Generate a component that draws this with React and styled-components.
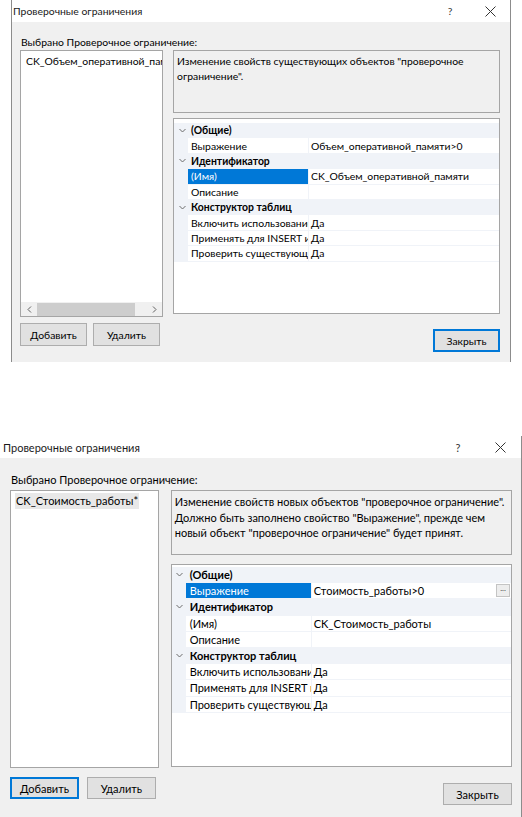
import React from "react"
import styled, { createGlobalStyle } from "styled-components"

const GlobalStyle = createGlobalStyle`
  html, body {
    margin: 0;
    padding: 0;
    background: #fff;
  }
  body {
    font-family: "Segoe UI", Lato, "Open Sans", sans-serif;
    color: #000;
  }
`

const Page = styled.div`
  width: 522px;
  height: 817px;
  overflow: hidden;
  background: #fff;
  display: flex;
  flex-direction: column;
`

const Window = styled.div`
  margin-left: ${p => p.$left}px;
  margin-top: ${p => p.$top}px;
  width: ${p => p.$width}px;
  box-sizing: border-box;
  border-left: ${p => (p.$leftBorder ? "1px solid #8c8c8c" : "none")};
  border-right: 1px solid #8c8c8c;
  font-size: ${p => p.$font}px;
  display: flex;
  flex-direction: column;
  flex-shrink: 0;
`

const TitleBar = styled.div`
  height: 22px;
  background: #fff;
  display: flex;
  align-items: center;
  padding-left: ${p => p.$pad}px;
  color: #1a1a1a;
`

const Title = styled.div`
  flex: 1;
`

const Caption = styled.div`
  width: ${p => p.$w}px;
  display: flex;
  justify-content: center;
  color: #333;
`

const Body = styled.div`
  background: #f0f0f0;
  height: ${p => p.$height}px;
  box-sizing: border-box;
  padding: ${p => p.$padTop}px ${p => p.$padRight}px 0 ${p => p.$padLeft}px;
  display: flex;
  flex-direction: column;
`

const Label = styled.div`
  height: ${p => p.$h}px;
  line-height: ${p => p.$h}px;
  margin-left: 1px;
  margin-bottom: ${p => p.$mb}px;
  white-space: nowrap;
`

const Main = styled.div`
  display: flex;
  align-items: flex-start;
  gap: ${p => p.$gap}px;
`

const ListBox = styled.div`
  width: ${p => p.$w}px;
  height: ${p => p.$h}px;
  box-sizing: border-box;
  border: 1px solid #a5a5a5;
  background: #fff;
  display: flex;
  flex-direction: column;
  overflow: hidden;
`

const ListItems = styled.div`
  flex: 1;
  padding: 2px 0 0 4px;
  overflow: hidden;
`

const ListItem = styled.div`
  white-space: nowrap;
  display: inline-block;
  line-height: 16px;
  padding: 0 1px;
  background: ${p => (p.$inactive ? "#e8e8e8" : "transparent")};
`

const HScroll = styled.div`
  height: 14px;
  background: #f0f0f0;
  display: flex;
  align-items: center;
`

const ScrollArrow = styled.div`
  width: 16px;
  display: flex;
  justify-content: center;
  align-items: center;
`

const ScrollTrack = styled.div`
  flex: 1;
  height: 13px;
  display: flex;
`

const ScrollThumb = styled.div`
  width: ${p => p.$w}px;
  height: 100%;
  background: #cdcdcd;
`

const RightCol = styled.div`
  width: ${p => p.$w}px;
  display: flex;
  flex-direction: column;
  gap: ${p => p.$gap}px;
`

const DescBox = styled.div`
  height: ${p => p.$h}px;
  box-sizing: border-box;
  border: 1px solid #a5a5a5;
  background: #f0f0f0;
  padding: 3px 3px;
  line-height: ${p => p.$lh}px;
  white-space: nowrap;
  overflow: hidden;
`

const Grid = styled.div`
  height: ${p => p.$h}px;
  box-sizing: border-box;
  border: 1px solid #a5a5a5;
  background: #fff;
  padding-top: ${p => p.$padTop}px;
  overflow: hidden;
`

const Row = styled.div`
  display: grid;
  grid-template-columns: 14px ${p => p.$name}px minmax(0, 1fr);
  height: ${p => p.$h}px;
  box-sizing: border-box;
  border-bottom: 1px solid #f0f3f8;
  background: ${p => (p.$cat ? "#f0f3f8" : "#fff")};
  align-items: stretch;
`

const Gutter = styled.div`
  background: #f0f3f8;
  display: flex;
  align-items: center;
  justify-content: center;
  padding-left: 2px;
`

const CatLabel = styled.div`
  grid-column: 2 / 4;
  font-weight: bold;
  padding-left: ${p => p.$pad}px;
  display: flex;
  align-items: center;
  white-space: nowrap;
`

const NameCell = styled.div`
  padding-left: ${p => p.$pad}px;
  display: flex;
  align-items: center;
  white-space: nowrap;
  overflow: hidden;
  background: ${p => (p.$selected ? "#0078d7" : "#fff")};
  color: ${p => (p.$selected ? "#fff" : "#000")};
  border-right: 1px solid #f0f3f8;
`

const ValueCell = styled.div`
  padding-left: 2px;
  display: flex;
  align-items: center;
  white-space: nowrap;
  overflow: hidden;
  justify-content: space-between;
`

const EllipsisButton = styled.div`
  width: 12px;
  height: 11px;
  border: 1px solid #c4c4c4;
  background: #ededed;
  font-size: 8px;
  line-height: 6px;
  text-align: center;
  color: #444;
  margin-right: 1px;
`

const Buttons = styled.div`
  display: flex;
  align-items: flex-start;
  margin-top: ${p => p.$mt}px;
`

const ButtonGroup = styled.div`
  display: flex;
  gap: ${p => p.$gap}px;
  flex: 1;
`

const Button = styled.div`
  width: ${p => p.$w}px;
  height: ${p => p.$h}px;
  box-sizing: border-box;
  border: ${p => (p.$default ? "2px solid #0078d7" : "1px solid #adadad")};
  background: #e1e1e1;
  display: flex;
  align-items: center;
  justify-content: center;
  margin-top: ${p => p.$mt || 0}px;
`

const Chevron = () => (
  <svg width="7" height="5" viewBox="0 0 7 5">
    <path d="M0.5 1 L3.5 4 L6.5 1" fill="none" stroke="#6d6d6d" strokeWidth="1" />
  </svg>
)

const Arrow = ({ dir }) => (
  <svg width="5" height="7" viewBox="0 0 5 7">
    <path
      d={dir === "left" ? "M4 0.5 L1 3.5 L4 6.5" : "M1 0.5 L4 3.5 L1 6.5"}
      fill="none"
      stroke="#606060"
      strokeWidth="1"
    />
  </svg>
)

const CloseIcon = () => (
  <svg width="11" height="11" viewBox="0 0 11 11">
    <path d="M0.5 0.5 L10.5 10.5 M10.5 0.5 L0.5 10.5" stroke="#333" strokeWidth="1" />
  </svg>
)

const PropertyGrid = ({ rows, cfg }) => (
  <Grid $h={cfg.gridH} $padTop={cfg.gridPad}>
    {rows.map((r, i) =>
      r.cat ? (
        <Row key={i} $cat $h={cfg.rowH} $name={cfg.nameW}>
          <Gutter>
            <Chevron />
          </Gutter>
          <CatLabel $pad={cfg.namePad}>{r.label}</CatLabel>
        </Row>
      ) : (
        <Row key={i} $h={cfg.rowH} $name={cfg.nameW}>
          <Gutter />
          <NameCell $pad={cfg.namePad} $selected={r.selected}>
            {r.label}
          </NameCell>
          <ValueCell>
            <span>{r.value}</span>
            {r.ellipsis && <EllipsisButton>...</EllipsisButton>}
          </ValueCell>
        </Row>
      )
    )}
  </Grid>
)

const Dialog = ({ cfg, item, inactiveItem, scroll, desc, rows, defaultBtn }) => (
  <Window
    $left={cfg.left}
    $top={cfg.top}
    $width={cfg.width}
    $leftBorder={cfg.leftBorder}
    $font={cfg.font}
  >
    <TitleBar $pad={cfg.titlePad}>
      <Title>Проверочные ограничения</Title>
      <Caption $w={cfg.capW}>?</Caption>
      <Caption $w={cfg.capW}>
        <CloseIcon />
      </Caption>
    </TitleBar>
    <Body
      $height={cfg.bodyH}
      $padTop={cfg.padTop}
      $padLeft={cfg.padLeft}
      $padRight={cfg.padRight}
    >
      <Label $h={cfg.labelH} $mb={cfg.labelMb}>
        Выбрано Проверочное ограничение:
      </Label>
      <Main $gap={cfg.gap}>
        <ListBox $w={cfg.listW} $h={cfg.listH}>
          <ListItems>
            <ListItem $inactive={inactiveItem}>{item}</ListItem>
          </ListItems>
          {scroll && (
            <HScroll>
              <ScrollArrow>
                <Arrow dir="left" />
              </ScrollArrow>
              <ScrollTrack>
                <ScrollThumb $w={98} />
              </ScrollTrack>
              <ScrollArrow>
                <Arrow dir="right" />
              </ScrollArrow>
            </HScroll>
          )}
        </ListBox>
        <RightCol $w={cfg.rightW} $gap={cfg.rightGap}>
          <DescBox $h={cfg.descH} $lh={cfg.descLh}>
            {desc.map((line, i) => (
              <div key={i}>{line}</div>
            ))}
          </DescBox>
          <PropertyGrid rows={rows} cfg={cfg} />
        </RightCol>
      </Main>
      <Buttons $mt={cfg.btnMt}>
        <ButtonGroup $gap={cfg.btnGap}>
          <Button $w={cfg.btnW} $h={cfg.btnH} $default={defaultBtn === "add"}>
            Добавить
          </Button>
          <Button $w={cfg.btnW} $h={cfg.btnH}>
            Удалить
          </Button>
        </ButtonGroup>
        <Button
          $w={cfg.btnW}
          $h={cfg.btnH}
          $mt={cfg.closeMt}
          $default={defaultBtn === "close"}
        >
          Закрыть
        </Button>
      </Buttons>
    </Body>
  </Window>
)

const first = {
  left: 11, top: 0, width: 500, leftBorder: true, font: 10.4,
  titlePad: 1, capW: 40, bodyH: 340,
  padTop: 12, padLeft: 8, padRight: 10,
  labelH: 16, labelMb: 0, gap: 10,
  listW: 143, listH: 267, rightW: 327, rightGap: 5,
  descH: 63, descLh: 15, gridH: 196, gridPad: 4,
  rowH: 15.4, nameW: 121, namePad: 3,
  btnMt: 6, btnGap: 6, btnW: 67, btnH: 23, closeMt: 6,
}

const second = {
  left: 0, top: 74, width: 522, leftBorder: false, font: 11,
  titlePad: 3, capW: 42, bodyH: 359,
  padTop: 13, padLeft: 10, padRight: 9,
  labelH: 17, labelMb: 2, gap: 12,
  listW: 149, listH: 278, rightW: 342, rightGap: 9,
  descH: 65, descLh: 15.5, gridH: 203, gridPad: 2,
  rowH: 16.2, nameW: 126, namePad: 4,
  btnMt: 9, btnGap: 8, btnW: 69, btnH: 22, closeMt: 6,
}

const rows1 = [
  { cat: true, label: "(Общие)" },
  { label: "Выражение", value: "Объем_оперативной_памяти>0" },
  { cat: true, label: "Идентификатор" },
  { label: "(Имя)", value: "CK_Объем_оперативной_памяти", selected: true },
  { label: "Описание", value: "" },
  { cat: true, label: "Конструктор таблиц" },
  { label: "Включить использование", value: "Да" },
  { label: "Применять для INSERT и UPDATE", value: "Да" },
  { label: "Проверить существующие данные при создании", value: "Да" },
]

const rows2 = [
  { cat: true, label: "(Общие)" },
  { label: "Выражение", value: "Стоимость_работы>0", selected: true, ellipsis: true },
  { cat: true, label: "Идентификатор" },
  { label: "(Имя)", value: "CK_Стоимость_работы" },
  { label: "Описание", value: "" },
  { cat: true, label: "Конструктор таблиц" },
  { label: "Включить использование", value: "Да" },
  { label: "Применять для INSERT и UPDATE", value: "Да" },
  { label: "Проверить существующие данные при создании", value: "Да" },
]

export default function App() {
  return (
    <Page>
      <GlobalStyle />
      <Dialog
        cfg={first}
        item="CK_Объем_оперативной_памяти"
        scroll
        desc={[
          "Изменение свойств существующих объектов \"проверочное",
          "ограничение\".",
        ]}
        rows={rows1}
        defaultBtn="close"
      />
      <Dialog
        cfg={second}
        item="CK_Стоимость_работы*"
        inactiveItem
        desc={[
          "Изменение свойств новых объектов \"проверочное ограничение\".",
          "Должно быть заполнено свойство \"Выражение\", прежде чем",
          "новый объект \"проверочное ограничение\" будет принят.",
        ]}
        rows={rows2}
        defaultBtn="add"
      />
    </Page>
  )
}
